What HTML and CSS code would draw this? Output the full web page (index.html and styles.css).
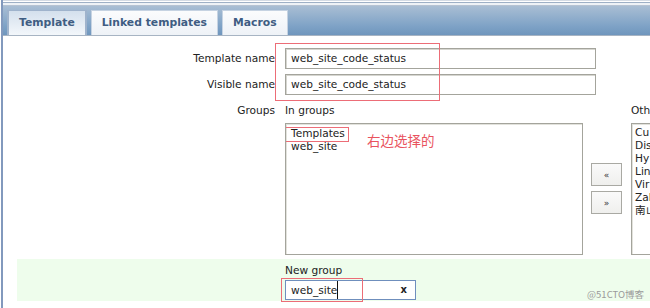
FILE: index.html
```html
<!DOCTYPE html>
<html lang="zh-CN">
<head>
  <meta charset="UTF-8">
  <title>Template – web_site_code_status</title>
  <link rel="stylesheet" href="styles.css">
</head>
<body>
<div class="page">
  <div class="topline"></div>

  <!-- tabs -->
  <div class="tabbar">
    <div class="tab active">Template</div>
    <div class="tab">Linked templates</div>
    <div class="tab">Macros</div>
  </div>

  <!-- form -->
  <div class="form">
    <div class="row">
      <div class="label">Template name</div>
      <div class="field"><div class="textbox wide">web_site_code_status</div></div>
    </div>
    <div class="row second">
      <div class="label">Visible name</div>
      <div class="field"><div class="textbox wide">web_site_code_status</div></div>
    </div>
    <div class="row groups">
      <div class="label">Groups</div>
      <div class="field twin">
        <div class="col">
          <div class="caption">In groups</div>
          <div class="listbox left">
            <div class="opt">Templates</div>
            <div class="opt">web_site</div>
            <span class="note">右边选择的</span>
            <span class="mark mark-templates"></span>
          </div>
        </div>
        <div class="movers">
          <button class="mover">&laquo;</button>
          <button class="mover">&raquo;</button>
        </div>
        <div class="col other">
          <div class="caption">Oth</div>
          <div class="listbox right">
            <div class="opt">Cu</div>
            <div class="opt">Dis</div>
            <div class="opt">Hy</div>
            <div class="opt">Lin</div>
            <div class="opt">Vir</div>
            <div class="opt">Zal</div>
            <div class="opt">南山</div>
          </div>
        </div>
      </div>
    </div>

    <div class="newgroup">
      <div class="caption">New group</div>
      <div class="textbox short">
        <span class="typed">web_site</span>
        <span class="clear">x</span>
      </div>
      <span class="mark mark-newgroup"></span>
    </div>

    <span class="mark mark-names"></span>
  </div>

  <div class="watermark">@51CTO博客</div>
</div>
</body>
</html>
```

FILE: styles.css
```css
* {
  box-sizing: border-box;
  margin: 0;
  padding: 0;
}
html, body {
  width: 650px;
  height: 308px;
  overflow: hidden;
}
body {
  font-family: "DejaVu Sans", Verdana, sans-serif;
  font-size: 10.6px;
  color: #222;
  background: #fff;
}
.page {
  position: relative;
  margin-left: 1px;
  height: 308px;
  border-left: 2px solid #8299bd;
}

/* top chrome */
.topline {
  height: 6px;
  border-top: 1px solid #d4dbe4;
  border-bottom: 1px solid #b6c3d3;
  background: linear-gradient(#fff 0, #fff 1px, #9eb0c6 1px, #9eb0c6 2px, #eef2f6 2px);
}
.tabbar {
  display: flex;
  align-items: flex-end;
  gap: 4px;
  height: 30px;
  padding-left: 4px;
  background: linear-gradient(#a9bed4, #7ea2c6 70%, #6f96bd);
  border-bottom: 1px solid #a7b4c3;
}
.tab {
  height: 25px;
  line-height: 24px;
  padding: 0 10px;
  font-weight: bold;
  font-size: 10.8px;
  color: #3f5d83;
  background: linear-gradient(#fbfcfd, #eef2f7);
  border: 1px solid #c6d3e2;
  border-bottom: none;
}
.tab.active {
  background: linear-gradient(#d4e0ed, #f3f7fb);
  border-color: #9fb3cc;
  border-width: 1px 2px 0;
}

/* form */
.form {
  position: relative;
  padding-top: 12px;
}
.row {
  display: flex;
}
.row.second {
  margin-top: 5px;
}
.row.groups {
  margin-top: 9px;
}
.label {
  flex: none;
  width: 272px;
  text-align: right;
  line-height: 21px;
}
.row.groups .label {
  line-height: 13px;
}
.field {
  flex: none;
  margin-left: 10px;
}
.textbox {
  height: 21px;
  line-height: 19px;
  padding-left: 5px;
  border: 1px solid #a4a49c;
  box-shadow: inset 1px 1px 0 #d6d6d0;
  background: #fff;
  white-space: nowrap;
}
.textbox.wide {
  width: 311px;
}
.twin {
  display: flex;
  align-items: flex-start;
}
.col {
  flex: none;
  display: flex;
  flex-direction: column;
}
.col.other {
  width: 19px;
}
.caption {
  line-height: 13px;
  white-space: nowrap;
}
.listbox {
  position: relative;
  margin-top: 6px;
  height: 132px;
  padding: 3px 5px;
  border: 1px solid #a4a49c;
  box-shadow: inset 1px 1px 0 #e2e2dc;
  line-height: 12.5px;
  white-space: nowrap;
  overflow: hidden;
}
.listbox.left {
  width: 298px;
}
.listbox.right {
  padding: 2px 0 0 3px;
  border-right: none;
  line-height: 13px;
}
.movers {
  flex: none;
  display: flex;
  flex-direction: column;
  gap: 5px;
  margin: 59px 9px 0 8px;
}
.mover {
  width: 31px;
  height: 23px;
  font-family: "DejaVu Sans", sans-serif;
  font-size: 9px;
  color: #333;
  background: linear-gradient(#fafafa, #efefed);
  border: 1px solid #a9a9a3;
}
.note {
  position: absolute;
  left: 81px;
  top: 8px;
  font-family: "Noto Sans CJK SC", sans-serif;
  font-size: 13.5px;
  line-height: 16px;
  color: #e9535e;
}

/* new group band */
.newgroup {
  position: relative;
  margin: 4px 0 0 14px;
  height: 42px;
  padding: 5px 0 0 268px;
  background: #eefdec;
}
.textbox.short {
  display: flex;
  justify-content: space-between;
  width: 131px;
  height: 20px;
  margin-top: 3px;
  padding-right: 8px;
  border: 1px solid #6f8fbd;
  box-shadow: none;
  line-height: 18px;
}
.typed {
  border-right: 1px solid #111;
}
.clear {
  font-weight: bold;
  font-size: 10px;
}

/* red annotation boxes */
.mark {
  position: absolute;
  border: 1px solid #ec6d77;
  pointer-events: none;
}
.mark-names {
  left: 272px;
  top: 7px;
  width: 165px;
  height: 58px;
}
.mark-templates {
  left: -2px;
  top: 3px;
  width: 65px;
  height: 15px;
}
.mark-newgroup {
  left: 264px;
  top: 19px;
  width: 82px;
  height: 24px;
}
.watermark {
  position: absolute;
  right: 6px;
  bottom: 7px;
  font-family: "Noto Sans CJK SC", sans-serif;
  font-size: 9.5px;
  color: #9a9a9a;
}
```
